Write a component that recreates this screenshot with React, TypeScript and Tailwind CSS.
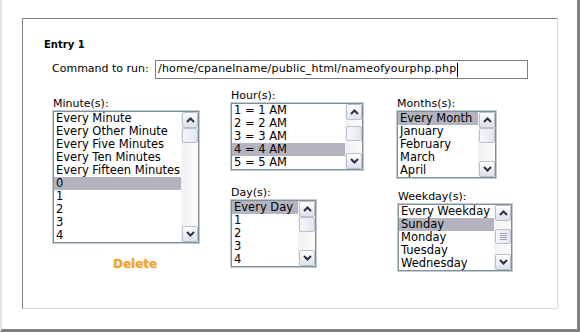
import React from "react";

type ListBoxProps = {
  label: string;
  items: string[];
  selected: number;
  boxClass: string;
  gapClass: string;
  grip?: boolean;
};

function Chevron({ up }: { up?: boolean }) {
  return (
    <svg width="9" height="6" viewBox="0 0 9 6" className="block">
      <path
        d={up ? "M1 5 L4.5 1.5 L8 5" : "M1 1 L4.5 4.5 L8 1"}
        fill="none"
        stroke="#27314a"
        strokeWidth="2"
      />
    </svg>
  );
}

function ScrollButton({ up }: { up?: boolean }) {
  return (
    <div className="h-[16px] w-[16px] flex items-center justify-center rounded-[2px] border border-[#b7c0cf] bg-gradient-to-b from-white to-[#dde1e9]">
      <Chevron up={up} />
    </div>
  );
}

function ListBox({ label, items, selected, boxClass, gapClass, grip }: ListBoxProps) {
  return (
    <div>
      <div className="h-[13px] leading-[13px] pl-[1px] text-[11px]">{label}</div>
      <div className={`border border-[#c3ccd1] ${boxClass}`}>
        <div className="flex border border-[#7f9099] bg-white">
          <div className="flex-1 min-w-0">
            {items.map((it, i) => (
              <div
                key={it}
                className={
                  "h-[13px] leading-[13px] pl-[2px] whitespace-nowrap overflow-hidden text-[11.5px] " +
                  (i === selected ? "bg-[#b3b4bf]" : "")
                }
              >
                {it}
              </div>
            ))}
          </div>
          <div className="w-[17px] flex flex-col bg-gradient-to-r from-[#f1f1f3] to-[#fbfbfc] pl-[1px]">
            <ScrollButton up />
            <div className={gapClass} />
            <div className="w-[16px] h-[15px] flex flex-col items-center justify-center gap-[1px] rounded-[2px] border border-[#b7c0cf] bg-gradient-to-r from-[#f6f7fa] to-[#e3e6ee]">
              {grip && (
                <>
                  <div className="w-[7px] h-px bg-[#9aa4b8]" />
                  <div className="w-[7px] h-px bg-[#9aa4b8]" />
                  <div className="w-[7px] h-px bg-[#9aa4b8]" />
                  <div className="w-[7px] h-px bg-[#9aa4b8]" />
                </>
              )}
            </div>
            <div className="flex-1" />
            <ScrollButton />
          </div>
        </div>
      </div>
    </div>
  );
}

export default function App() {
  return (
    <div className="w-[580px] h-[332px] bg-white border-l-2 border-l-[#e3e3e3] border-r-[3px] border-r-[#808080] border-b-[3px] border-b-[#808080] pt-[18px] pl-[20px] text-black font-['DejaVu_Sans',Verdana,sans-serif] overflow-hidden">
      <div className="w-[536px] h-[291px] border border-t-[#808080] border-l-[#808080] border-r-[#dcdcdc] border-b-[#dcdcdc]">
        <div className="ml-[21px] mt-[20px] h-[12px] leading-[12px] text-[10px] font-bold">Entry 1</div>

        <div className="ml-[29px] mt-[9px] h-[19px] flex items-center">
          <div className="w-[103px] text-[11px] whitespace-nowrap">Command to run:</div>
          <div className="w-[373px] h-[19px] border border-[#7d7d7d] flex items-center pl-[2px] text-[11px] tracking-[0.2px] whitespace-nowrap">
            /home/cpanelname/public_html/nameofyourphp.php
            <span className="ml-[1px] w-px h-[14px] bg-black" />
          </div>
        </div>

        <div className="ml-[29px] mt-[10px] flex items-start">
          <div className="w-[148px] mt-[8px]">
            <ListBox
              label="Minute(s):"
              items={[
                "Every Minute",
                "Every Other Minute",
                "Every Five Minutes",
                "Every Ten Minutes",
                "Every Fifteen Minutes",
                "0",
                "1",
                "2",
                "3",
                "4",
              ]}
              selected={5}
              boxClass="w-[148px]"
              gapClass="h-0"
            />
            <div className="mt-[13px] pl-[61px] h-[15px] leading-[15px] text-[12px] font-bold text-[#f2a12c] [text-shadow:0_0_2px_#fcd9a0]">
              Delete
            </div>
          </div>

          <div className="ml-[30px] w-[134px]">
            <ListBox
              label="Hour(s):"
              items={["1 = 1 AM", "2 = 2 AM", "3 = 3 AM", "4 = 4 AM", "5 = 5 AM"]}
              selected={3}
              boxClass="w-[134px]"
              gapClass="h-[6px]"
            />
            <div className="mt-[15px]">
              <ListBox
                label="Day(s):"
                items={["Every Day", "1", "2", "3", "4"]}
                selected={0}
                boxClass="w-[87px]"
                gapClass="h-0"
              />
            </div>
          </div>

          <div className="ml-[32px] mt-[8px]">
            <ListBox
              label="Months(s):"
              items={["Every Month", "January", "February", "March", "April"]}
              selected={0}
              boxClass="w-[101px]"
              gapClass="h-0"
            />
            <div className="mt-[11px] ml-[1px]">
              <ListBox
                label="Weekday(s):"
                items={["Every Weekday", "Sunday", "Monday", "Tuesday", "Wednesday"]}
                selected={1}
                boxClass="w-[116px]"
                gapClass="h-[8px]"
                grip
              />
            </div>
          </div>
        </div>
      </div>
    </div>
  );
}
